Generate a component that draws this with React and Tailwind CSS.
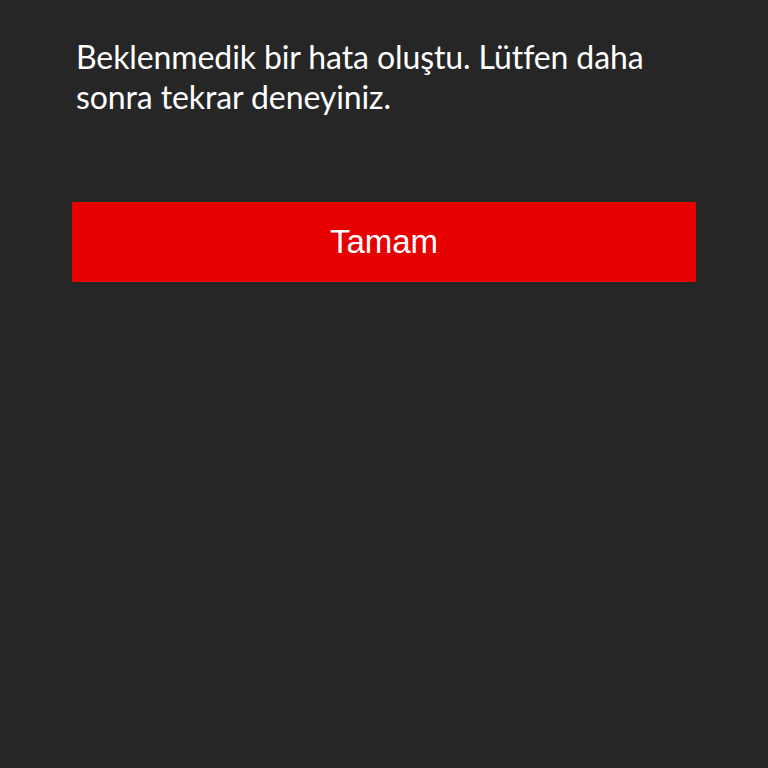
export default function App() {
  return (
    <div className="min-h-[768px] w-full bg-[#262626] px-[72px] pt-[37px]">
      <p className="pl-[4px] pr-[40px] font-['Lato',sans-serif] text-[32px] leading-[40px] tracking-[-0.1px] text-white">
        Beklenmedik bir hata oluştu. Lütfen daha sonra tekrar deneyiniz.
      </p>
      <button className="mt-[85px] flex h-[80px] w-full items-center justify-center bg-[#e60000] font-['Liberation_Sans',Arial,sans-serif] text-[33px] text-white">
        Tamam
      </button>
    </div>
  );
}
